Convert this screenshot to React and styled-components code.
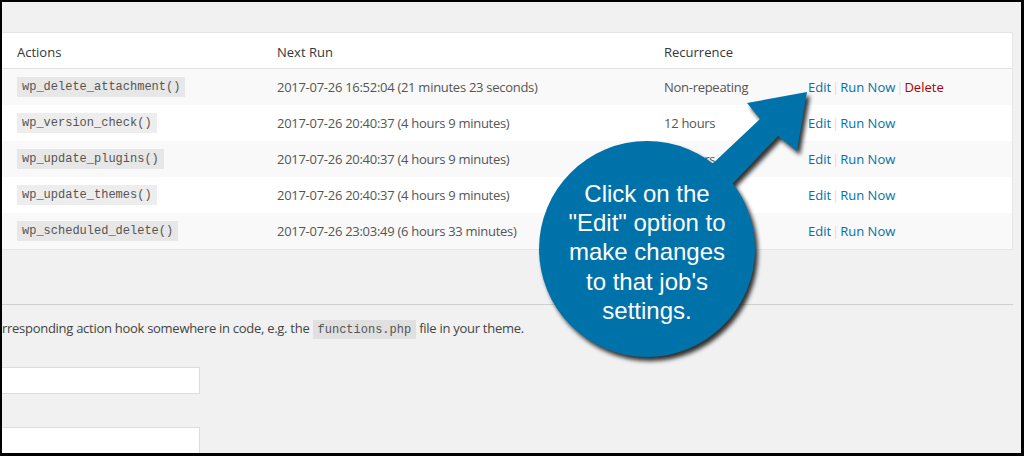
import React from "react";
import styled, { createGlobalStyle } from "styled-components";

const GlobalStyle = createGlobalStyle`
  html, body { margin: 0; padding: 0; background: #000; }
  body { font-family: "Open Sans", "Noto Sans", sans-serif; font-size: 13px; color: #444; }
  * { box-sizing: border-box; }
`;

const Frame = styled.div`
  position: relative;
  width: 1024px;
  height: 456px;
  overflow: hidden;
  background: #f1f1f1;
  border-style: solid;
  border-color: #000;
  border-width: 2px 3px 3px 2px;
`;

const Table = styled.div`
  margin: 30px 8px 0 0;
  background: #fff;
  border: 1px solid #e5e5e5;
  border-left: none;
`;

const columns = "260px 387px 144px 1fr";

const HeaderRow = styled.div`
  display: grid;
  grid-template-columns: ${columns};
  height: 36px;
  padding-top: 3px;
  border-bottom: 1px solid #e1e1e1;
  color: #32373c;
`;

const Row = styled.div`
  display: grid;
  grid-template-columns: ${columns};
  height: 36px;
  background: ${(p) => (p.$striped ? "#f9f9f9" : "#fff")};
  color: #555;
  letter-spacing: -0.28px;
`;

const Cell = styled.div`
  display: flex;
  align-items: center;
  padding: 0 15px;
  white-space: nowrap;
  line-height: 20px;
`;

const ActionsCell = styled(Cell)`
  letter-spacing: 0;
`;

const Code = styled.code`
  font-family: "Liberation Mono", "DejaVu Sans Mono", monospace;
  font-size: 12px;
  line-height: 15px;
  letter-spacing: 0;
  padding: 3px 5px 2px;
  background: rgba(0, 0, 0, 0.07);
  color: #555;
`;

const Link = styled.a`
  color: ${(p) => (p.$danger ? "#a00" : "#0073aa")};
  text-decoration: none;
`;

const Sep = styled.span`
  color: #ddd;
  margin: 0 1px;
`;

const Divider = styled.hr`
  margin: 54px 8px 0 0;
  border: none;
  border-top: 1px solid #cfcfcf;
  height: 0;
`;

const Help = styled.p`
  margin: 13px 0 0;
  line-height: 20px;
  color: #444;
  white-space: nowrap;
  letter-spacing: -0.28px;
`;

const Field = styled.input`
  display: block;
  width: 198px;
  height: 27px;
  margin-top: ${(p) => p.$gap}px;
  background: #fff;
  border: 1px solid #ddd;
  border-left: none;
  outline: none;
`;

const Callout = styled.div`
  position: absolute;
  left: 0;
  top: 0;
  width: 1024px;
  height: 456px;
  pointer-events: none;
`;

const Shape = styled.svg`
  position: absolute;
  left: -2px;
  top: -2px;
  filter: drop-shadow(3px 4px 2px rgba(0, 0, 0, 0.8));
`;

const Bubble = styled.div`
  position: absolute;
  left: 537px;
  top: 140px;
  width: 216px;
  height: 216px;
  display: flex;
  align-items: center;
  justify-content: center;
  text-align: center;
  font-family: "Liberation Sans", Arial, sans-serif;
  font-size: 24px;
  line-height: 29.3px;
  color: #fff;
  padding-top: 4px;
`;

const jobs = [
  { hook: "wp_delete_attachment()", next: "2017-07-26 16:52:04 (21 minutes 23 seconds)", rec: "Non-repeating", del: true },
  { hook: "wp_version_check()", next: "2017-07-26 20:40:37 (4 hours 9 minutes)", rec: "12 hours" },
  { hook: "wp_update_plugins()", next: "2017-07-26 20:40:37 (4 hours 9 minutes)", rec: "12 hours" },
  { hook: "wp_update_themes()", next: "2017-07-26 20:40:37 (4 hours 9 minutes)", rec: "12 hours" },
  { hook: "wp_scheduled_delete()", next: "2017-07-26 23:03:49 (6 hours 33 minutes)", rec: "Daily" },
];

export default function App() {
  return (
    <>
      <GlobalStyle />
      <Frame>
        <Table>
          <HeaderRow>
            <Cell>Actions</Cell>
            <Cell>Next Run</Cell>
            <Cell>Recurrence</Cell>
            <Cell />
          </HeaderRow>
          {jobs.map((j, i) => (
            <Row key={j.hook} $striped={i % 2 === 0}>
              <Cell>
                <Code>{j.hook}</Code>
              </Cell>
              <Cell>{j.next}</Cell>
              <Cell>{j.rec}</Cell>
              <ActionsCell>
                <Link href="#">Edit</Link>
                <Sep>|</Sep>
                <Link href="#">Run Now</Link>
                {j.del && (
                  <>
                    <Sep>|</Sep>
                    <Link href="#" $danger>
                      Delete
                    </Link>
                  </>
                )}
              </ActionsCell>
            </Row>
          ))}
        </Table>
        <Divider />
        <Help>
          rresponding action hook somewhere in code, e.g. the <Code>functions.php</Code> file in your theme.
        </Help>
        <Field $gap={29} />
        <Field $gap={33} />
        <Callout>
          <Shape width="1024" height="456" viewBox="0 0 1024 456">
            <polygon
              points="807,92 747,103 760,119 690,185 712,205 778,136 797,151"
              fill="#0072aa"
            />
            <circle cx="647" cy="249" r="108" fill="#0072aa" />
          </Shape>
          <Bubble>
            Click on the
            <br />
            "Edit" option to
            <br />
            make changes
            <br />
            to that job's
            <br />
            settings.
          </Bubble>
        </Callout>
      </Frame>
    </>
  );
}
